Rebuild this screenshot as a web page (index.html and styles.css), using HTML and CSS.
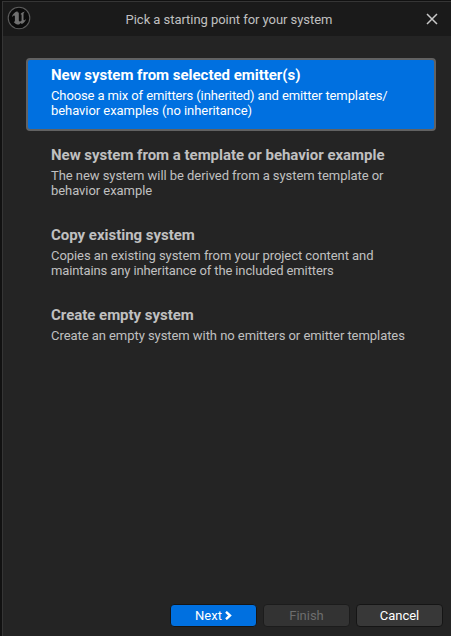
FILE: index.html
```html
<!DOCTYPE html>
<html lang="en">
<head>
<meta charset="utf-8">
<title>Pick a starting point for your system</title>
<link rel="stylesheet" href="styles.css">
</head>
<body>
<div class="window">
  <header class="titlebar">
    <svg class="logo" viewBox="0 0 24 24">
      <circle cx="12" cy="12" r="10.800" fill="#0a0a0a" stroke="#5c5c5c" stroke-width="1.100"/>
      <path d="M10.500 5.200C7.500 6 5.500 8.200 4.900 11c.9-1.100 1.700-1.600 2.300-1.600.5 0 .7.300.7.900v4.500c0 .7-.3 1.100-1.200 1.100 1.200 1.700 3.200 2.700 5.400 2.600l1.500-1.500 1.300 1c2.200-1.100 3.800-3 4.300-5.200-.9 1-1.500 1.500-2 1.500s-.7-.2-.7-.8V8.300c0-1 .5-1.800 1.400-2.700-1.900.4-3.400 1.300-4.500 2.600.9 0 1.200.3 1.200 1v5.300c-.5.6-1 .9-1.600.9-.8 0-1.200-.4-1.200-1.200V7.300c0-.9-.4-1.300-1.300-1.100z" fill="#707070"/>
    </svg>
    <h1 class="caption">Pick a starting point for your system</h1>
    <svg class="close" viewBox="0 0 12 12"><path d="M1 1l10 10M11 1L1 11" stroke="#c8c8c8" stroke-width="1.500" fill="none"/></svg>
  </header>
  <main class="options">
    <section class="option selected">
      <h2>New system from selected emitter(s)</h2>
      <p><span class="tight">Choose a mix of emitters (inherited) and emitter templates/</span><br>behavior examples (no inheritance)</p>
    </section>
    <section class="option">
      <h2>New system from a template or behavior example</h2>
      <p>The new system will be derived from a system template or<br>behavior example</p>
    </section>
    <section class="option">
      <h2>Copy existing system</h2>
      <p>Copies an existing system from your project content and<br><span class="tight">maintains any inheritance of the included emitters</span></p>
    </section>
    <section class="option">
      <h2>Create empty system</h2>
      <p>Create an empty system with no emitters or emitter templates</p>
    </section>
  </main>
  <footer class="actions">
    <button class="button primary">Next<svg class="chevron" viewBox="0 0 7 9"><path d="M1 .8L5 4.500 1 8.200" fill="none" stroke="#fff" stroke-width="2.400"/></svg></button>
    <button class="button" disabled>Finish</button>
    <button class="button">Cancel</button>
  </footer>
</div>
</body>
</html>
```
FILE: styles.css
```css
* {
  box-sizing: border-box;
}
body {
  margin: 0;
  background: #111;
  font-family: Roboto, sans-serif;
  font-size: 13px;
  color: #c0c0c0;
}
.window {
  display: flex;
  flex-direction: column;
  width: 449px;
  height: 635px;
  margin: 1px 0 0 2px;
  border: solid #353535;
  border-width: 1px 0 0 1px;
  background: #242424;
}
.titlebar {
  display: flex;
  align-items: center;
  height: 34px;
  padding: 0 13px 0 4px;
  background: #1a1a1a;
}
.logo {
  width: 24px;
  height: 24px;
  margin-bottom: 2px;
}
.caption {
  flex: 1;
  margin: 1px 0 0;
  padding-left: 1px;
  text-align: center;
  font-size: 13px;
  font-weight: 400;
  letter-spacing: -0.05px;
}
.close {
  width: 12px;
  height: 12px;
}
.options {
  display: flex;
  flex: 1;
  flex-direction: column;
  gap: 7px;
  padding: 22px 15px 0 23px;
}
.option {
  height: 73px;
  padding: 6px 23px;
  border: 2px solid transparent;
  border-radius: 4px;
}
.option h2 {
  margin: 0 0 4px;
  font-size: 15px;
  line-height: 18px;
  font-weight: 700;
  letter-spacing: -0.02px;
}
.option p {
  margin: 0;
  line-height: 15px;
  letter-spacing: -0.055px;
  white-space: nowrap;
}
.option .tight {
  letter-spacing: -0.115px;
}
.option.selected {
  border-color: #626262;
  background: #0070e0;
  color: #fff;
}
.actions {
  display: flex;
  justify-content: flex-end;
  gap: 6px;
  padding: 0 8px 9px 0;
}
.button {
  display: flex;
  align-items: center;
  justify-content: center;
  width: 87px;
  height: 23px;
  padding: 0;
  border: 1px solid #151515;
  border-radius: 4px;
  background: #383838;
  color: #fff;
  font: 13px Roboto, sans-serif;
}
.button:disabled {
  background: #333;
  border-color: #1c1c1c;
  color: #6d6d6d;
}
.button.primary {
  background: #0070e0;
}
.chevron {
  width: 7px;
  height: 9px;
  margin: 0 0 1px 3px;
}
```
